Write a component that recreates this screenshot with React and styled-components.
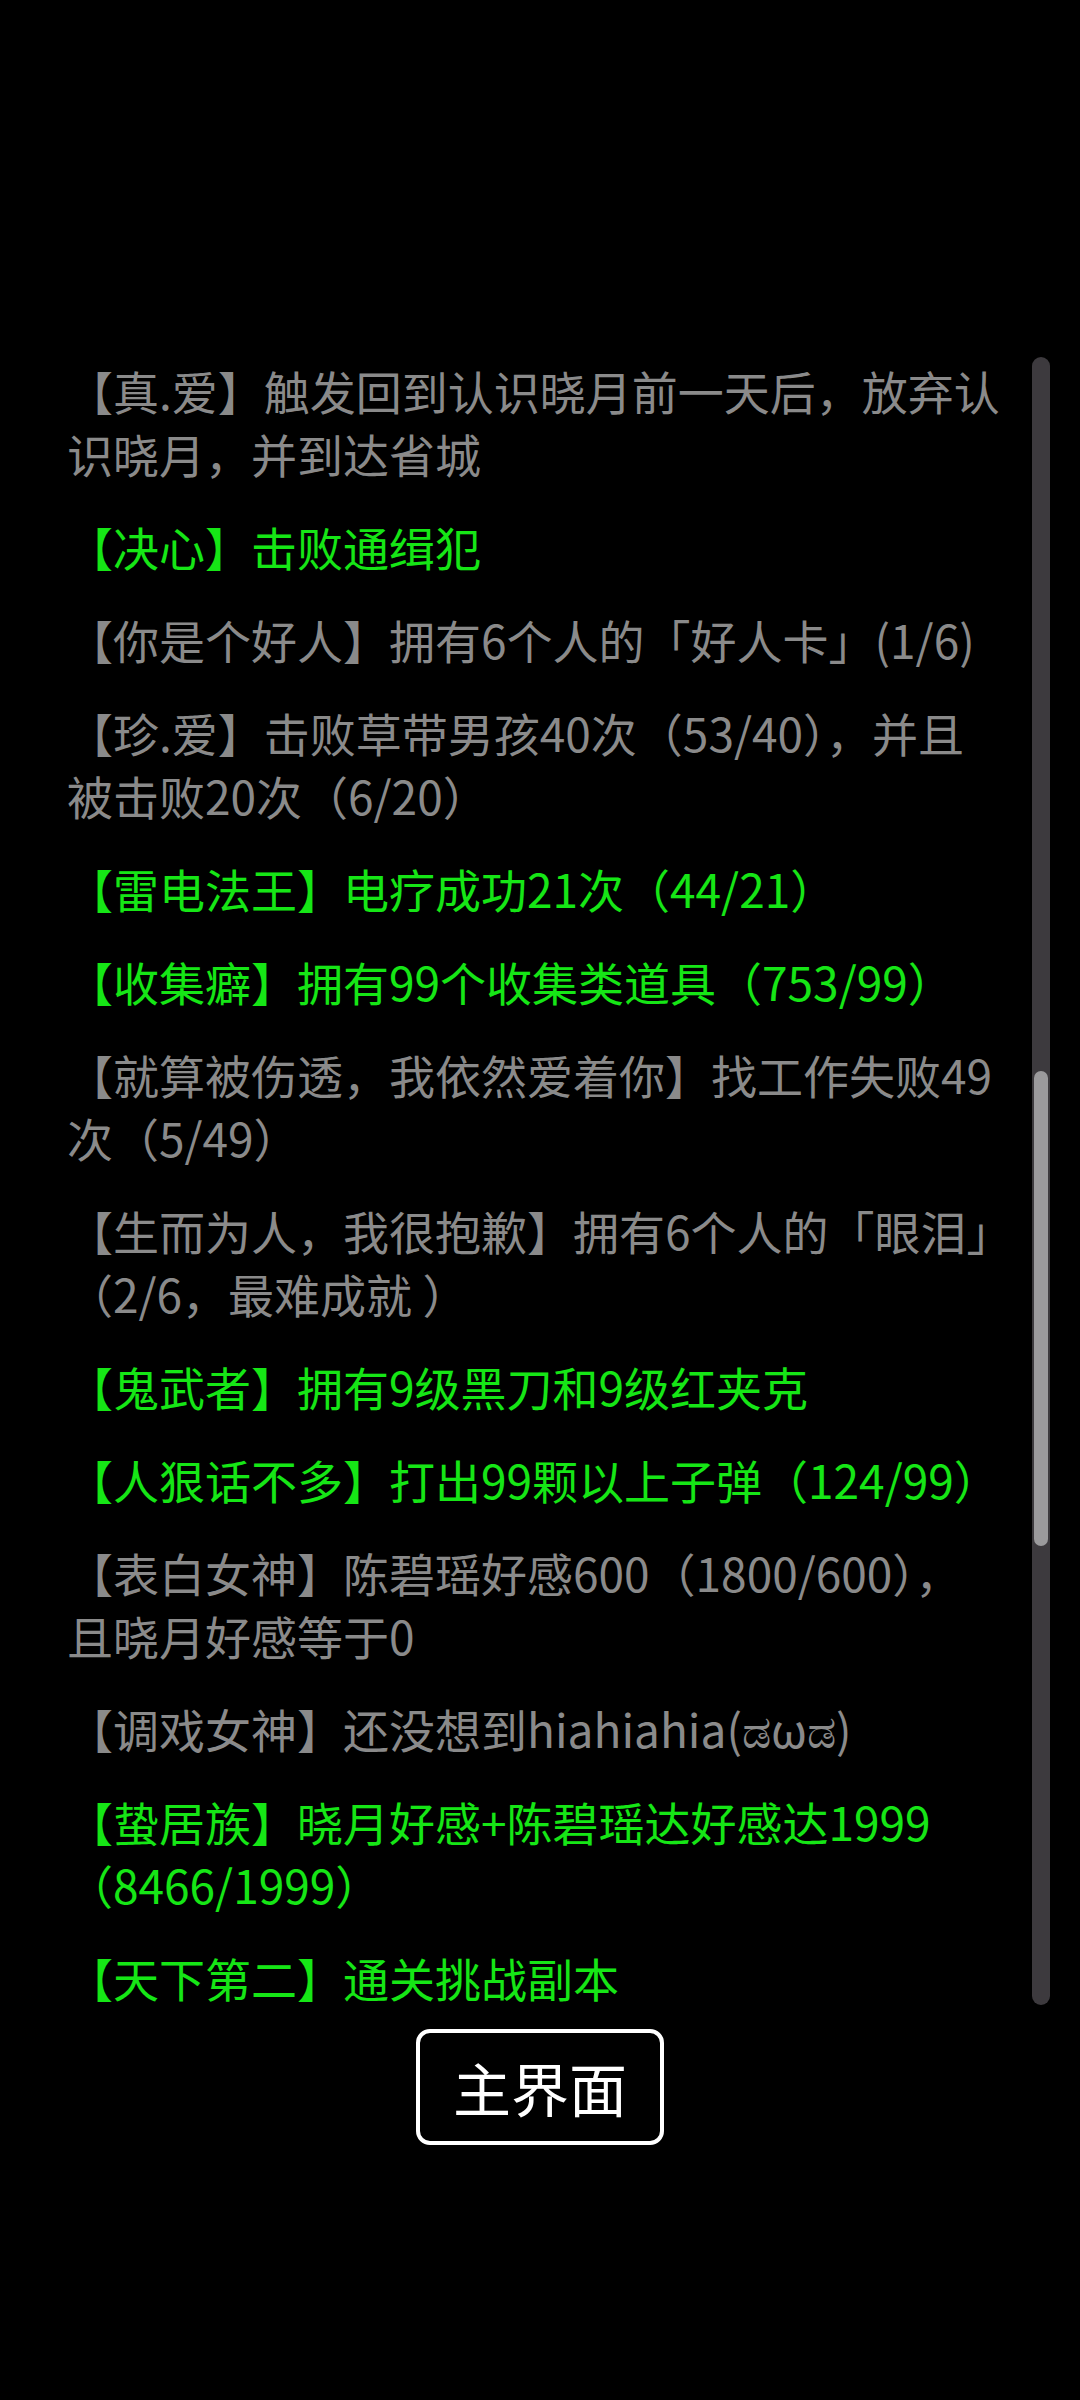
import React from 'react';
import styled, { createGlobalStyle } from 'styled-components';

const achievements = [
  { text: '【真.爱】触发回到认识晓月前一天后，放弃认识晓月，并到达省城', done: false },
  { text: '【决心】击败通缉犯', done: true },
  { text: '【你是个好人】拥有6个人的「好人卡」(1/6)', done: false },
  { text: '【珍.爱】击败草带男孩40次（53/40），并且被击败20次（6/20）', done: false },
  { text: '【雷电法王】电疗成功21次（44/21）', done: true },
  { text: '【收集癖】拥有99个收集类道具（753/99）', done: true },
  { text: '【就算被伤透，我依然爱着你】找工作失败49次（5/49）', done: false },
  { text: '【生而为人，我很抱歉】拥有6个人的「眼泪」（2/6，最难成就 ）', done: false },
  { text: '【鬼武者】拥有9级黑刀和9级红夹克', done: true },
  { text: '【人狠话不多】打出99颗以上子弹（124/99）', done: true },
  { text: '【表白女神】陈碧瑶好感600（1800/600），且晓月好感等于0', done: false },
  { text: '【调戏女神】还没想到hiahiahia(ಡωಡ)', done: false },
  { text: '【蛰居族】晓月好感+陈碧瑶达好感达1999（8466/1999）', done: true },
  { text: '【天下第二】通关挑战副本', done: true },
];

export default function App() {
  return (
    <>
      <GlobalStyle />
      <Page>
        <ListRow>
          <List>
            {achievements.map((a, i) => (
              <Entry key={i} done={a.done}>{a.text}</Entry>
            ))}
          </List>
          <Track>
            <Thumb />
          </Track>
        </ListRow>
        <MainButton>主界面</MainButton>
      </Page>
    </>
  );
}

const GlobalStyle = createGlobalStyle`
  html, body {
    margin: 0;
    background: #000;
  }
  body {
    font-family: "Noto Sans CJK SC", "Noto Sans", sans-serif;
  }
`;

const Page = styled.div`
  width: 1080px;
  height: 2400px;
  background: #000;
  padding-top: 357px;
  box-sizing: border-box;
  display: flex;
  flex-direction: column;
  align-items: center;
`;

const ListRow = styled.div`
  width: 100%;
  height: 1648px;
  display: flex;
  padding: 0 30px 0 67px;
  box-sizing: border-box;
  gap: 29px;
`;

const List = styled.div`
  flex: 1;
  display: flex;
  flex-direction: column;
  gap: 30px;
  padding-top: 2px;
`;

const Entry = styled.div`
  font-size: 46px;
  line-height: 63px;
  color: ${(p) => (p.done ? '#16e616' : '#8a8a8a')};
`;

const Track = styled.div`
  width: 18px;
  height: 100%;
  border-radius: 9px;
  background: #3d3a3e;
  padding: 714px 2px 0;
  box-sizing: border-box;
`;

const Thumb = styled.div`
  height: 475px;
  border-radius: 7px;
  background: #9b9a9c;
`;

const MainButton = styled.button`
  margin-top: 24px;
  width: 248px;
  height: 116px;
  border: 4px solid #fff;
  border-radius: 14px;
  background: #000;
  color: #fff;
  font-family: "Noto Sans CJK SC", "Noto Sans", sans-serif;
  font-size: 58px;
  padding: 0;
  display: flex;
  align-items: center;
  justify-content: center;
`;
